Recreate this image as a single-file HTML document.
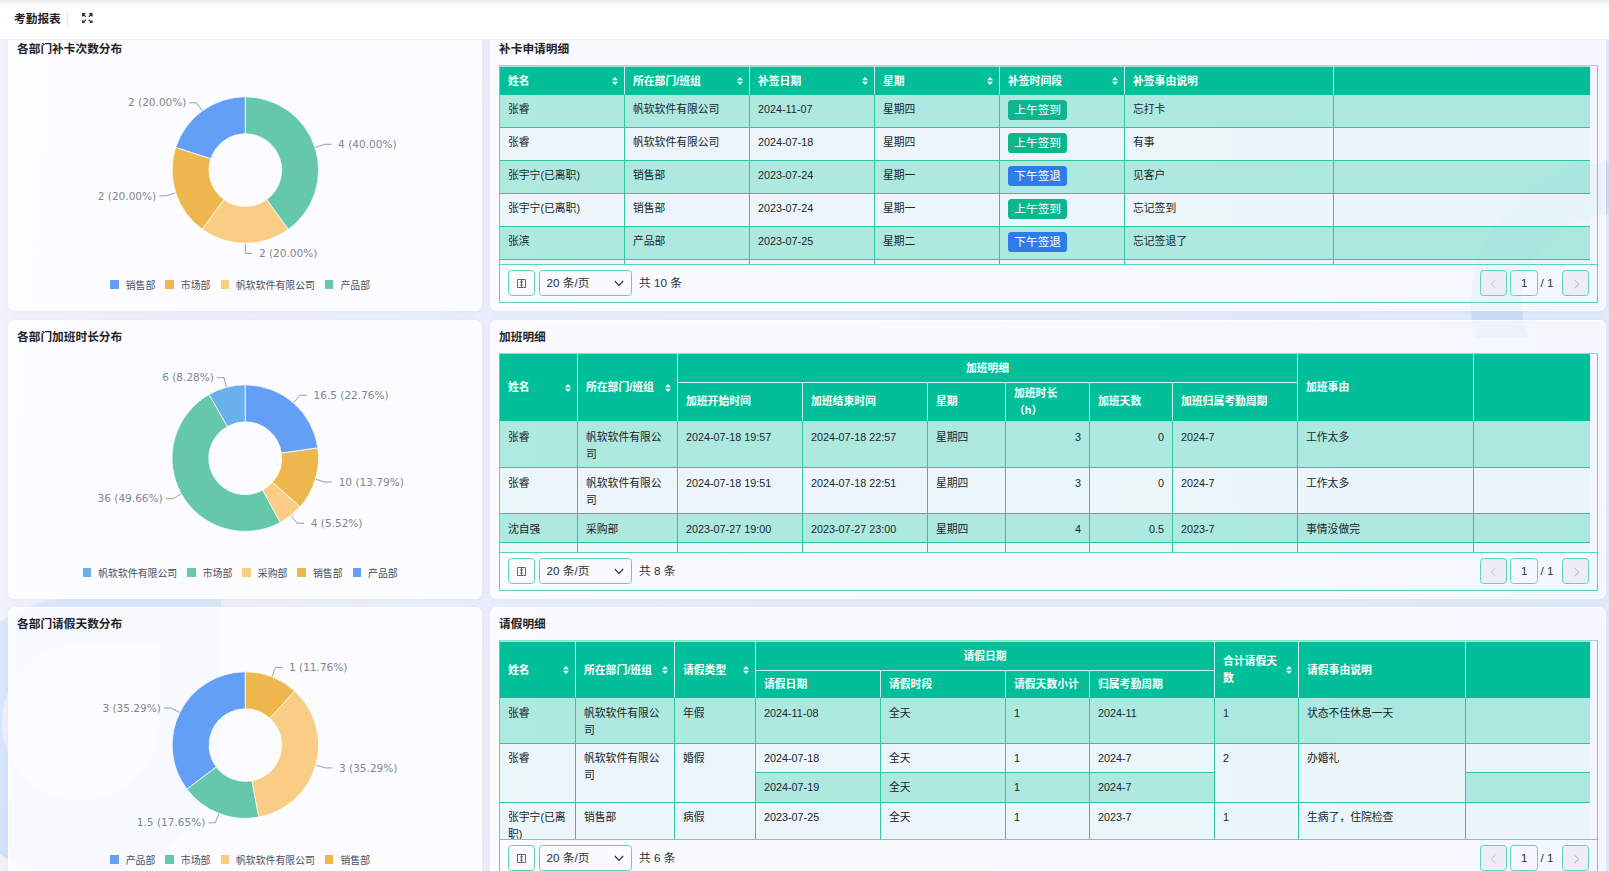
<!DOCTYPE html><html lang="zh-CN"><head><meta charset="utf-8"><title>考勤报表</title><style>
*{box-sizing:border-box;margin:0;padding:0}
html,body{width:1609px;height:871px;overflow:hidden}
body{position:relative;font-family:"Liberation Sans", "Noto Sans CJK SC", sans-serif;font-size:10.8px;line-height:17px;color:#1f2329;
background:#E9EEFB;}
.bg{position:absolute;left:0;top:0;width:1609px;height:871px;overflow:hidden;
background:linear-gradient(95deg,#F2F2FD 0%,#ECEEFB 30%,#E7ECFB 60%,#E1EAFB 100%);}
.bg i{position:absolute;border-radius:50%;display:block}
.hdr{position:absolute;left:0;top:0;width:1609px;height:40px;background:#fff;border-bottom:1px solid #ECEDF1;
box-shadow:inset 0 5px 4px -3px rgba(0,0,0,.10);z-index:5}
.hdr .t{position:absolute;left:14px;top:10px;font-weight:bold;font-size:11.7px;line-height:17px;color:#1f2329;white-space:nowrap}
.hdr .dv{position:absolute;left:67px;top:11px;width:1px;height:16px;background:#E6E8EE}
.hdr svg{position:absolute;left:82px;top:12.5px}
.card{position:absolute;background:rgba(255,255,255,.8);border-radius:7px;box-shadow:0 1px 6px rgba(120,140,200,.10),inset 0 0 0 1px rgba(255,255,255,.7)}
.card.rc{background:linear-gradient(90deg,rgba(255,255,255,.8) 0%,rgba(255,255,255,.72) 55%,rgba(255,255,255,.62) 100%)}
.ct{position:absolute;left:9px;top:8px;font-weight:bold;font-size:11.7px;line-height:17px;color:#1f2329;white-space:nowrap}
.pie{position:absolute;left:0;top:0}
.pie text{font-family:"DejaVu Sans", "Noto Sans CJK SC", sans-serif;}
.lg{position:absolute;left:0;width:100%;top:246.5px;height:14px;text-align:center;font-family:"DejaVu Sans", "Noto Sans CJK SC", sans-serif;font-size:9.9px;line-height:14px;color:#4a505c;white-space:nowrap}
.lg span{display:inline-block;margin-right:10px;vertical-align:top}
.lg b{display:inline-block;width:8.4px;height:9px;margin-right:7.1px;vertical-align:-0.8px}
.tw{position:absolute;left:9px;top:33px;width:1099px;height:238px;border:1px solid #5FD3B6;border-top-color:#8CDFCA;overflow:hidden}
.tb{position:absolute;left:0;top:0;width:1090px;height:198px;overflow:hidden}
table{border-collapse:separate;border-spacing:0;table-layout:fixed;width:1090px}
th,td{padding:5.4px 8px 5.3px 8px;text-align:left;vertical-align:top;font-weight:normal;overflow:hidden;word-break:break-all}
th{background:#00BF99;color:#fff;font-weight:bold;border-right:1px solid #D4F4EC;border-bottom:1px solid #00BF99;vertical-align:middle;position:relative}
td{border-right:1px solid #2FC5A2;border-bottom:1px solid #2FC5A2;color:#20242b}
tr.o td{background:rgba(124,222,204,.6)}
tr.e td{background:rgba(226,244,247,.6)}
th.nf,td.nf{border-right:none}
td.r{text-align:right}
table.t1 td{padding-top:5.9px;padding-bottom:4px}
table.t1 th,table.t3 th{padding-top:6.4px;padding-bottom:4.4px}
table.t1 th{border-top:1px solid #A8E7D9;padding-top:5.5px;padding-bottom:4.4px}
table.t2 td{padding-top:6.8px;padding-bottom:4px}
table.t2 tr.f td{padding-top:7.8px}
table.t3 td{padding-top:6.4px;padding-bottom:4px}
table.t3 tr.f3 td{padding-top:6.6px}
table.t3 tr.h2 th{padding-top:4px;padding-bottom:4px}
table.t3 tr.h1 th{border-top:1px solid #A8E7D9;padding-top:5.4px}
th.c{text-align:center}
th.g{border-bottom:1px solid #D4F4EC}
tr.h2 th{padding-top:4px;padding-bottom:4px}
.so{position:absolute;right:6.3px;top:50%;margin-top:-3.2px;width:6px;height:8px}
.tag{display:inline-block;height:20px;line-height:20px;margin-top:-0.9px;padding:0 6.3px;border-radius:3.6px;color:#fff;font-size:11.7px;vertical-align:top}
.tg{background:#0DB68F}
.tbl{background:#2F7BEA}
.pg{position:absolute;left:0;top:198px;width:100%;height:38px;border-top:1px solid #5FD3B6;font-size:11.7px;color:#2b3038}
.pg .b{position:absolute;top:5px;height:26px;border:1px solid #5FD3B6;border-radius:3.6px}
.pg .x{position:absolute;top:5px;height:26px;line-height:26px;white-space:nowrap}
.pg .d{background:#EBEEF7}
.pg svg{position:absolute}
</style></head><body><div class="bg"><i style="left:-61px;top:597px;width:282px;height:282px;border-radius:141px 0 141px 141px;background:linear-gradient(180deg,rgba(190,220,250,.42),rgba(186,216,250,.6))"></i><i style="left:2px;top:644px;width:157px;height:157px;border-radius:78px 0 78px 78px;background:#EEF1FC"></i><div style="position:absolute;left:1471px;top:163px;width:282px;height:175px;overflow:hidden"><i style="left:0;top:0;width:282px;height:282px;border:51px solid rgba(176,206,246,.48);box-sizing:border-box"></i></div></div><div class="card" style="left:8px;top:32px;width:474.4px;height:279px"><div class="ct">各部门补卡次数分布</div><svg class="pie" width="474.4" height="279" viewBox="0 0 474.4 279"><path d="M237.35 64.85A73.25 73.25 0 0 0 167.69 115.46L202.83 126.88A36.3 36.3 0 0 1 237.35 101.80Z" fill="#63A0F5" stroke="#fff" stroke-opacity=".85" stroke-width=".9"/><path d="M167.69 115.46A73.25 73.25 0 0 0 194.29 197.36L216.01 167.47A36.3 36.3 0 0 1 202.83 126.88Z" fill="#EDB74E" stroke="#fff" stroke-opacity=".85" stroke-width=".9"/><path d="M194.29 197.36A73.25 73.25 0 0 0 280.41 197.36L258.69 167.47A36.3 36.3 0 0 1 216.01 167.47Z" fill="#F9CD85" stroke="#fff" stroke-opacity=".85" stroke-width=".9"/><path d="M280.41 197.36A73.25 73.25 0 0 0 237.35 64.85L237.35 101.80A36.3 36.3 0 0 1 258.69 167.47Z" fill="#66C8AA" stroke="#fff" stroke-opacity=".85" stroke-width=".9"/><path d="M194.00 78.43L188.42 70.75L181.42 70.75" fill="none" stroke="#8C939D" stroke-width=".9"/><text x="178.42" y="74.45" font-size="10.55" fill="#7f8690" text-anchor="end">2 (20.00%)</text><path d="M167.21 160.89L158.17 163.83L151.17 163.83" fill="none" stroke="#8C939D" stroke-width=".9"/><text x="148.17" y="167.53" font-size="10.55" fill="#7f8690" text-anchor="end">2 (20.00%)</text><path d="M237.35 211.85L237.35 221.35L244.35 221.35" fill="none" stroke="#8C939D" stroke-width=".9"/><text x="250.95" y="225.05" font-size="10.55" fill="#7f8690" text-anchor="start">2 (20.00%)</text><path d="M307.49 115.31L316.53 112.37L323.53 112.37" fill="none" stroke="#8C939D" stroke-width=".9"/><text x="330.13" y="116.07" font-size="10.55" fill="#7f8690" text-anchor="start">4 (40.00%)</text></svg><div class="lg"><span><b style="background:#63A0F5"></b>销售部</span><span><b style="background:#EDB74E"></b>市场部</span><span><b style="background:#F9CD85"></b>帆软软件有限公司</span><span><b style="background:#66C8AA"></b>产品部</span></div></div><div class="card" style="left:8px;top:320px;width:474.4px;height:279px"><div class="ct">各部门加班时长分布</div><svg class="pie" width="474.4" height="279" viewBox="0 0 474.4 279"><path d="M237.35 64.85A73.25 73.25 0 0 0 200.95 74.53L219.31 106.60A36.3 36.3 0 0 1 237.35 101.80Z" fill="#69B1EC" stroke="#fff" stroke-opacity=".85" stroke-width=".9"/><path d="M200.95 74.53A73.25 73.25 0 0 0 272.36 202.44L254.70 169.99A36.3 36.3 0 0 1 219.31 106.60Z" fill="#66C8AA" stroke="#fff" stroke-opacity=".85" stroke-width=".9"/><path d="M272.36 202.44A73.25 73.25 0 0 0 292.14 186.72L264.50 162.19A36.3 36.3 0 0 1 254.70 169.99Z" fill="#F9CD85" stroke="#fff" stroke-opacity=".85" stroke-width=".9"/><path d="M292.14 186.72A73.25 73.25 0 0 0 309.87 127.82L273.29 133.00A36.3 36.3 0 0 1 264.50 162.19Z" fill="#EDB74E" stroke="#fff" stroke-opacity=".85" stroke-width=".9"/><path d="M309.87 127.82A73.25 73.25 0 0 0 237.35 64.85L237.35 101.80A36.3 36.3 0 0 1 273.29 133.00Z" fill="#63A0F5" stroke="#fff" stroke-opacity=".85" stroke-width=".9"/><path d="M218.39 66.83L215.95 57.65L208.95 57.65" fill="none" stroke="#8C939D" stroke-width=".9"/><text x="205.95" y="61.35" font-size="10.55" fill="#7f8690" text-anchor="end">6 (8.28%)</text><path d="M172.95 174.05L164.66 178.68L157.66 178.68" fill="none" stroke="#8C939D" stroke-width=".9"/><text x="154.66" y="182.38" font-size="10.55" fill="#7f8690" text-anchor="end">36 (49.66%)</text><path d="M283.24 195.83L289.15 203.27L296.15 203.27" fill="none" stroke="#8C939D" stroke-width=".9"/><text x="302.75" y="206.97" font-size="10.55" fill="#7f8690" text-anchor="start">4 (5.52%)</text><path d="M307.97 159.37L317.06 162.10L324.06 162.10" fill="none" stroke="#8C939D" stroke-width=".9"/><text x="330.66" y="165.80" font-size="10.55" fill="#7f8690" text-anchor="start">10 (13.79%)</text><path d="M285.70 82.41L291.93 75.24L298.93 75.24" fill="none" stroke="#8C939D" stroke-width=".9"/><text x="305.53" y="78.94" font-size="10.55" fill="#7f8690" text-anchor="start">16.5 (22.76%)</text></svg><div class="lg"><span><b style="background:#69B1EC"></b>帆软软件有限公司</span><span><b style="background:#66C8AA"></b>市场部</span><span><b style="background:#F9CD85"></b>采购部</span><span><b style="background:#EDB74E"></b>销售部</span><span><b style="background:#63A0F5"></b>产品部</span></div></div><div class="card" style="left:8px;top:607px;width:474.4px;height:279px"><div class="ct">各部门请假天数分布</div><svg class="pie" width="474.4" height="279" viewBox="0 0 474.4 279"><path d="M237.35 64.85A73.25 73.25 0 0 0 178.90 182.24L208.38 159.98A36.3 36.3 0 0 1 237.35 101.80Z" fill="#63A0F5" stroke="#fff" stroke-opacity=".85" stroke-width=".9"/><path d="M178.90 182.24A73.25 73.25 0 0 0 250.81 210.10L244.02 173.78A36.3 36.3 0 0 1 208.38 159.98Z" fill="#66C8AA" stroke="#fff" stroke-opacity=".85" stroke-width=".9"/><path d="M250.81 210.10A73.25 73.25 0 0 0 286.70 83.97L261.81 111.27A36.3 36.3 0 0 1 244.02 173.78Z" fill="#F9CD85" stroke="#fff" stroke-opacity=".85" stroke-width=".9"/><path d="M286.70 83.97A73.25 73.25 0 0 0 237.35 64.85L237.35 101.80A36.3 36.3 0 0 1 261.81 111.27Z" fill="#EDB74E" stroke="#fff" stroke-opacity=".85" stroke-width=".9"/><path d="M171.33 105.23L162.83 100.99L155.83 100.99" fill="none" stroke="#8C939D" stroke-width=".9"/><text x="152.83" y="104.69" font-size="10.55" fill="#7f8690" text-anchor="end">3 (35.29%)</text><path d="M210.71 206.87L207.28 215.73L200.28 215.73" fill="none" stroke="#8C939D" stroke-width=".9"/><text x="197.28" y="219.43" font-size="10.55" fill="#7f8690" text-anchor="end">1.5 (17.65%)</text><path d="M308.28 158.28L317.42 160.88L324.42 160.88" fill="none" stroke="#8C939D" stroke-width=".9"/><text x="331.02" y="164.58" font-size="10.55" fill="#7f8690" text-anchor="start">3 (35.29%)</text><path d="M263.99 69.33L267.42 60.47L274.42 60.47" fill="none" stroke="#8C939D" stroke-width=".9"/><text x="281.02" y="64.17" font-size="10.55" fill="#7f8690" text-anchor="start">1 (11.76%)</text></svg><div class="lg"><span><b style="background:#63A0F5"></b>产品部</span><span><b style="background:#66C8AA"></b>市场部</span><span><b style="background:#F9CD85"></b>帆软软件有限公司</span><span><b style="background:#EDB74E"></b>销售部</span></div></div><div class="card rc" style="left:490px;top:32px;width:1116px;height:279px"><div class="ct">补卡申请明细</div><div class="tw"><div class="tb"><table class="t1"><colgroup><col style="width:125px"><col style="width:125px"><col style="width:125px"><col style="width:125px"><col style="width:125px"><col style="width:209px"><col style="width:256px"></colgroup><tr style="height:29px"><th>姓名<svg class="so" viewBox="0 0 6 8"><path d="M3 0L6 3.2H0Z M3 8L6 4.8H0Z" fill="#fff"/></svg></th><th>所在部门/班组<svg class="so" viewBox="0 0 6 8"><path d="M3 0L6 3.2H0Z M3 8L6 4.8H0Z" fill="#fff"/></svg></th><th>补签日期<svg class="so" viewBox="0 0 6 8"><path d="M3 0L6 3.2H0Z M3 8L6 4.8H0Z" fill="#fff"/></svg></th><th>星期<svg class="so" viewBox="0 0 6 8"><path d="M3 0L6 3.2H0Z M3 8L6 4.8H0Z" fill="#fff"/></svg></th><th>补签时间段<svg class="so" viewBox="0 0 6 8"><path d="M3 0L6 3.2H0Z M3 8L6 4.8H0Z" fill="#fff"/></svg></th><th>补签事由说明</th><th class="nf"></th></tr><tr class="o" style="height:33px"><td>张睿</td><td>帆软软件有限公司</td><td>2024-11-07</td><td>星期四</td><td><span class="tag tg">上午签到</span></td><td>忘打卡</td><td class="nf"></td></tr><tr class="e" style="height:33px"><td>张睿</td><td>帆软软件有限公司</td><td>2024-07-18</td><td>星期四</td><td><span class="tag tg">上午签到</span></td><td>有事</td><td class="nf"></td></tr><tr class="o" style="height:33px"><td>张宇宁(已离职)</td><td>销售部</td><td>2023-07-24</td><td>星期一</td><td><span class="tag tbl">下午签退</span></td><td>见客户</td><td class="nf"></td></tr><tr class="e" style="height:33px"><td>张宇宁(已离职)</td><td>销售部</td><td>2023-07-24</td><td>星期一</td><td><span class="tag tg">上午签到</span></td><td>忘记签到</td><td class="nf"></td></tr><tr class="o" style="height:33px"><td>张滨</td><td>产品部</td><td>2023-07-25</td><td>星期二</td><td><span class="tag tbl">下午签退</span></td><td>忘记签退了</td><td class="nf"></td></tr><tr class="e" style="height:33px"><td>张滨</td><td>产品部</td><td>2023-07-26</td><td>星期三</td><td><span class="tag tg">上午签到</span></td><td>忘记了</td><td class="nf"></td></tr></table></div><div class="pg">
<div class="b" style="left:8px;width:26.8px"></div>
<svg style="left:17.2px;top:14px" width="9" height="9" viewBox="0 0 9 9"><path d="M.5 .5H8.5V8.5H.5Z M4.5 .5V8.5 M3.1 2.9H5.9 M3.1 6.1H5.9" fill="none" stroke="#4a4f5a" stroke-width=".85"/></svg>
<div class="b" style="left:39px;width:92.7px"></div>
<div class="x" style="left:46.5px">20 条/页</div>
<svg style="left:113.5px;top:15.2px" width="10" height="7" viewBox="0 0 10 7"><path d="M.8 1L5 5.4L9.2 1" fill="none" stroke="#2b3038" stroke-width="1.1"/></svg>
<div class="x" style="left:139px">共 10 条</div>
<div class="b d" style="left:980.2px;width:26.5px"></div>
<svg style="left:989.5px;top:13.5px" width="7" height="10" viewBox="0 0 7 10"><path d="M5.4 1.2L1.2 5.2L5.4 9.2" fill="none" stroke="#B8BCC6" stroke-width=".9"/></svg>
<div class="b" style="left:1010.2px;width:27.5px"></div>
<div class="x" style="left:1021px">1</div>
<div class="x" style="left:1040.6px">/ 1</div>
<div class="b d" style="left:1062px;width:26.8px"></div>
<svg style="left:1072.5px;top:13.5px" width="7" height="10" viewBox="0 0 7 10"><path d="M1.6 1.2L5.8 5.2L1.6 9.2" fill="none" stroke="#9EA3AE" stroke-width=".9"/></svg>
</div></div></div><div class="card rc" style="left:490px;top:320px;width:1116px;height:279px"><div class="ct">加班明细</div><div class="tw"><div class="tb"><table class="t2"><colgroup><col style="width:78px"><col style="width:100px"><col style="width:125px"><col style="width:125px"><col style="width:78px"><col style="width:84px"><col style="width:83px"><col style="width:125px"><col style="width:176px"><col style="width:116px"></colgroup><tr style="height:29px"><th rowspan="2">姓名<svg class="so" viewBox="0 0 6 8"><path d="M3 0L6 3.2H0Z M3 8L6 4.8H0Z" fill="#fff"/></svg></th><th rowspan="2">所在部门/班组<svg class="so" viewBox="0 0 6 8"><path d="M3 0L6 3.2H0Z M3 8L6 4.8H0Z" fill="#fff"/></svg></th><th colspan="6" class="c g">加班明细</th><th rowspan="2">加班事由</th><th rowspan="2" class="nf"></th></tr><tr class="h2" style="height:38px"><th>加班开始时间</th><th>加班结束时间</th><th>星期</th><th style="padding-top:1px;padding-bottom:1px">加班时长<br>（h）</th><th>加班天数</th><th>加班归属考勤周期</th></tr><tr class="o f" style="height:47px"><td>张睿</td><td>帆软软件有限公司</td><td>2024-07-18 19:57</td><td>2024-07-18 22:57</td><td>星期四</td><td class="r">3</td><td class="r">0</td><td>2024-7</td><td>工作太多</td><td class="nf"></td></tr><tr class="e" style="height:46px"><td>张睿</td><td>帆软软件有限公司</td><td>2024-07-18 19:51</td><td>2024-07-18 22:51</td><td>星期四</td><td class="r">3</td><td class="r">0</td><td>2024-7</td><td>工作太多</td><td class="nf"></td></tr><tr class="o" style="height:29px"><td>沈自强</td><td>采购部</td><td>2023-07-27 19:00</td><td>2023-07-27 23:00</td><td>星期四</td><td class="r">4</td><td class="r">0.5</td><td>2023-7</td><td>事情没做完</td><td class="nf"></td></tr><tr class="e" style="height:29px"><td>沈自强</td><td>采购部</td><td>2023-07-28 19:00</td><td>2023-07-28 23:00</td><td>星期五</td><td class="r">4</td><td class="r">0.5</td><td>2023-7</td><td>事情没做完</td><td class="nf"></td></tr></table></div><div class="pg">
<div class="b" style="left:8px;width:26.8px"></div>
<svg style="left:17.2px;top:14px" width="9" height="9" viewBox="0 0 9 9"><path d="M.5 .5H8.5V8.5H.5Z M4.5 .5V8.5 M3.1 2.9H5.9 M3.1 6.1H5.9" fill="none" stroke="#4a4f5a" stroke-width=".85"/></svg>
<div class="b" style="left:39px;width:92.7px"></div>
<div class="x" style="left:46.5px">20 条/页</div>
<svg style="left:113.5px;top:15.2px" width="10" height="7" viewBox="0 0 10 7"><path d="M.8 1L5 5.4L9.2 1" fill="none" stroke="#2b3038" stroke-width="1.1"/></svg>
<div class="x" style="left:139px">共 8 条</div>
<div class="b d" style="left:980.2px;width:26.5px"></div>
<svg style="left:989.5px;top:13.5px" width="7" height="10" viewBox="0 0 7 10"><path d="M5.4 1.2L1.2 5.2L5.4 9.2" fill="none" stroke="#B8BCC6" stroke-width=".9"/></svg>
<div class="b" style="left:1010.2px;width:27.5px"></div>
<div class="x" style="left:1021px">1</div>
<div class="x" style="left:1040.6px">/ 1</div>
<div class="b d" style="left:1062px;width:26.8px"></div>
<svg style="left:1072.5px;top:13.5px" width="7" height="10" viewBox="0 0 7 10"><path d="M1.6 1.2L5.8 5.2L1.6 9.2" fill="none" stroke="#9EA3AE" stroke-width=".9"/></svg>
</div></div></div><div class="card rc" style="left:490px;top:607px;width:1116px;height:279px"><div class="ct">请假明细</div><div class="tw"><div class="tb"><table class="t3"><colgroup><col style="width:76px"><col style="width:99px"><col style="width:81px"><col style="width:125px"><col style="width:125px"><col style="width:84px"><col style="width:125px"><col style="width:84px"><col style="width:167px"><col style="width:124px"></colgroup><tr class="h1" style="height:30px"><th rowspan="2">姓名<svg class="so" viewBox="0 0 6 8"><path d="M3 0L6 3.2H0Z M3 8L6 4.8H0Z" fill="#fff"/></svg></th><th rowspan="2">所在部门/班组<svg class="so" viewBox="0 0 6 8"><path d="M3 0L6 3.2H0Z M3 8L6 4.8H0Z" fill="#fff"/></svg></th><th rowspan="2">请假类型<svg class="so" viewBox="0 0 6 8"><path d="M3 0L6 3.2H0Z M3 8L6 4.8H0Z" fill="#fff"/></svg></th><th colspan="4" class="c g">请假日期</th><th rowspan="2">合计请假天<br>数<svg class="so" viewBox="0 0 6 8"><path d="M3 0L6 3.2H0Z M3 8L6 4.8H0Z" fill="#fff"/></svg></th><th rowspan="2">请假事由说明</th><th rowspan="2" class="nf"></th></tr><tr class="h2" style="height:27px"><th>请假日期</th><th>请假时段</th><th>请假天数小计</th><th>归属考勤周期</th></tr><tr class="o f3" style="height:46px"><td>张睿</td><td>帆软软件有限公司</td><td>年假</td><td>2024-11-08</td><td>全天</td><td>1</td><td>2024-11</td><td>1</td><td>状态不佳休息一天</td><td class="nf"></td></tr><tr class="e" style="height:29px"><td rowspan="2">张睿</td><td rowspan="2">帆软软件有限公司</td><td rowspan="2">婚假</td><td>2024-07-18</td><td>全天</td><td>1</td><td>2024-7</td><td rowspan="2">2</td><td rowspan="2">办婚礼</td><td class="nf"></td></tr><tr class="o" style="height:30px"><td>2024-07-19</td><td>全天</td><td>1</td><td>2024-7</td><td class="nf"></td></tr><tr class="e" style="height:40px"><td>张宇宁(已离职)</td><td>销售部</td><td>病假</td><td>2023-07-25</td><td>全天</td><td>1</td><td>2023-7</td><td>1</td><td>生病了，住院检查</td><td class="nf"></td></tr></table></div><div class="pg">
<div class="b" style="left:8px;width:26.8px"></div>
<svg style="left:17.2px;top:14px" width="9" height="9" viewBox="0 0 9 9"><path d="M.5 .5H8.5V8.5H.5Z M4.5 .5V8.5 M3.1 2.9H5.9 M3.1 6.1H5.9" fill="none" stroke="#4a4f5a" stroke-width=".85"/></svg>
<div class="b" style="left:39px;width:92.7px"></div>
<div class="x" style="left:46.5px">20 条/页</div>
<svg style="left:113.5px;top:15.2px" width="10" height="7" viewBox="0 0 10 7"><path d="M.8 1L5 5.4L9.2 1" fill="none" stroke="#2b3038" stroke-width="1.1"/></svg>
<div class="x" style="left:139px">共 6 条</div>
<div class="b d" style="left:980.2px;width:26.5px"></div>
<svg style="left:989.5px;top:13.5px" width="7" height="10" viewBox="0 0 7 10"><path d="M5.4 1.2L1.2 5.2L5.4 9.2" fill="none" stroke="#B8BCC6" stroke-width=".9"/></svg>
<div class="b" style="left:1010.2px;width:27.5px"></div>
<div class="x" style="left:1021px">1</div>
<div class="x" style="left:1040.6px">/ 1</div>
<div class="b d" style="left:1062px;width:26.8px"></div>
<svg style="left:1072.5px;top:13.5px" width="7" height="10" viewBox="0 0 7 10"><path d="M1.6 1.2L5.8 5.2L1.6 9.2" fill="none" stroke="#9EA3AE" stroke-width=".9"/></svg>
</div></div></div><div class="hdr"><div class="t">考勤报表</div><div class="dv"></div><svg width="10.6" height="10.6" viewBox="0 0 11 11"><g fill="none" stroke="#263450" stroke-width="1.25"><path d="M.6 3.6V.6H3.6M.8 .8L4 4"/><path d="M7.4 .6H10.4V3.6M10.2 .8L7 4"/><path d="M.6 7.4V10.4H3.6M.8 10.2L4 7"/><path d="M10.4 7.4V10.4H7.4M10.2 10.2L7 7"/></g></svg></div></body></html>
